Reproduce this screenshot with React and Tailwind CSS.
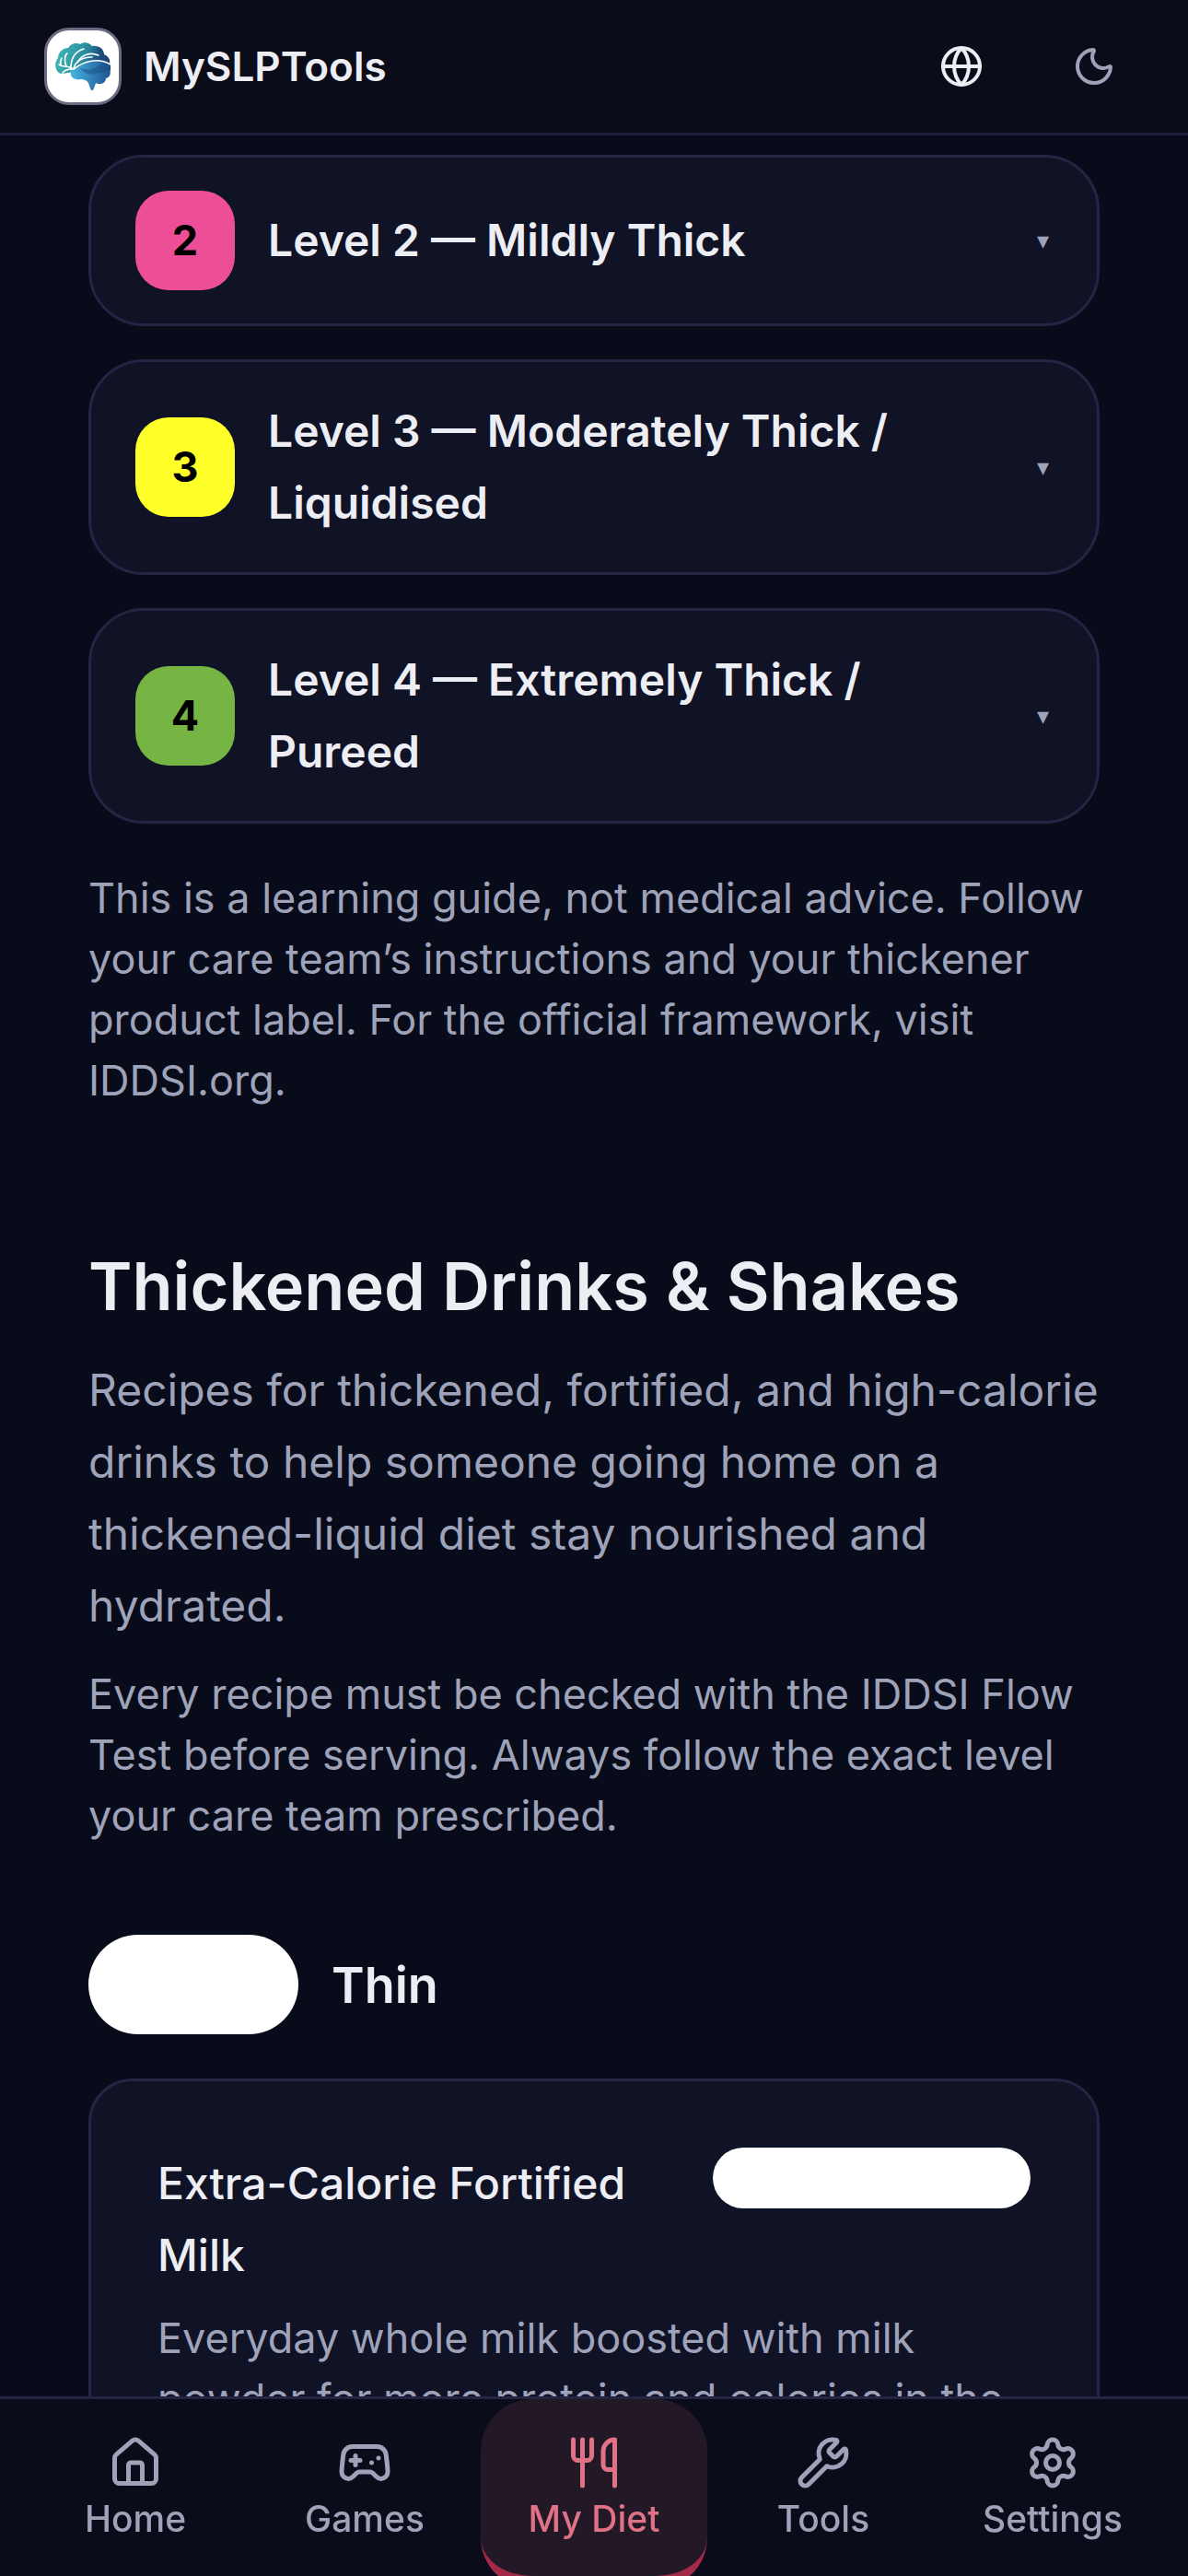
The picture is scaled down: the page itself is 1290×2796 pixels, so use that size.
import React, { useState } from 'react';
import { Globe, Moon, House, Gamepad2, Utensils, Wrench, Settings } from 'lucide-react';

const LEVELS = [
  { id: 2, name: 'Level 2 — Mildly Thick', badge: 'bg-[#ec4f98]' },
  { id: 3, name: 'Level 3 — Moderately Thick / Liquidised', badge: 'bg-[#ffff29]' },
  { id: 4, name: 'Level 4 — Extremely Thick / Pureed', badge: 'bg-[#76b543]' },
];

const TABS = [
  { id: 'home', label: 'Home', icon: House },
  { id: 'games', label: 'Games', icon: Gamepad2 },
  { id: 'diet', label: 'My Diet', icon: Utensils },
  { id: 'tools', label: 'Tools', icon: Wrench },
  { id: 'settings', label: 'Settings', icon: Settings },
];

function BrainLogo() {
  return (
    <svg viewBox="0 0 60 52" className="w-[60px]" aria-hidden="true">
      <defs>
        <linearGradient id="teal" x1="0" y1="0.4" x2="1" y2="0.6">
          <stop offset="0" stopColor="#3fb8b4" />
          <stop offset="0.5" stopColor="#2b8c9f" />
          <stop offset="0.75" stopColor="#1c4f80" />
          <stop offset="1" stopColor="#173f72" />
        </linearGradient>
        <linearGradient id="blue" x1="0" y1="0" x2="1" y2="0">
          <stop offset="0" stopColor="#45b4e0" />
          <stop offset="1" stopColor="#1f5490" />
        </linearGradient>
      </defs>
      <path d="M2 31c-3-5-2-11 1-14 0-6 5-11 11-11 3-5 9-6 13-4 4-3 10-2 13 2 7-1 13 3 13 9 5 2 7 6 6 10 3 4 1 10-4 13L20 32 8 34c-3 0-5-1-6-3Z" fill="url(#teal)" />
      <path d="M21 28c9-4 20-10 32-7 4 2 7 4 6 9 2 4 0 8-4 9 0 5-6 8-11 5l-2 6c-1 3-3 3-4 0l-2-6c-2-3-5-4-8-4-5 1-11-1-11-5-1-4 1-6 4-7Z" fill="url(#blue)" />
      <path d="M27 28c7 2 15 3 21-4 4-2 8-2 11-1 2 4-1 8-6 9-11 1-17 7-26-4Z" fill="#174a84" opacity="0.45" />
      <g fill="none" stroke="#fff" strokeWidth="1.6" strokeLinecap="round">
        <path d="M20 29c9-7 25-14 40-5" />
        <path d="M20 28c2-7 9-12 20-12" />
        <path d="M24 22c4-8 13-12 23-8" />
        <path d="M17 28c0-10 4-18 14-21" />
        <path d="M12 26c-3-7-1-13 1-14" />
        <path d="M6 25c-1-3 0-6 1-8" />
        <path d="M4 24c3 3 9 1 14 4" />
        <path d="M8 33c2-3 6-4 11-4" />
      </g>
    </svg>
  );
}

function Header() {
  return (
    <header className="sticky top-0 z-20 flex h-[147px] items-center justify-between border-b-[3px] border-[#1c1d38] bg-[#0a0c1a] px-12">
      <a href="#home" className="flex items-center gap-6">
        <span className="flex size-[84px] items-center justify-center rounded-[27px] border-[3px] border-[#6b6b82] bg-white">
          <BrainLogo />
        </span>
        <span className="text-[44px] font-semibold">MySLPTools</span>
      </a>
      <div className="flex gap-9">
        <button aria-label="Language" className="flex size-[108px] items-center justify-center">
          <Globe size={48} />
        </button>
        <button aria-label="Dark mode" className="flex size-[108px] items-center justify-center text-[#9fa3ba]">
          <Moon size={48} />
        </button>
      </div>
    </header>
  );
}

function LevelCard({ level }) {
  return (
    <button className="flex w-full items-center gap-9 rounded-[60px] border-[3px] border-[#242544] bg-[#101226] px-12 py-9 text-left">
      <span className={`flex size-[108px] shrink-0 items-center justify-center rounded-[36px] text-[45px] font-bold text-black ${level.badge}`}>
        {level.id}
      </span>
      <span className="flex-1 pr-20 text-5xl leading-[78px] font-semibold">{level.name}</span>
      <span className="pr-1 font-['DejaVu_Sans',sans-serif] text-[26px] text-[#9fa3ba]" aria-hidden="true">▾</span>
    </button>
  );
}

function RecipeCard() {
  return (
    <article className="mt-12 rounded-[48px] border-[3px] border-[#242544] bg-[#101226] p-[72px]">
      <div className="flex items-start justify-between gap-9">
        <h4 className="text-5xl leading-[78px] font-medium">Extra-Calorie Fortified Milk</h4>
        <span className="h-[66px] w-[345px] shrink-0 rounded-full bg-white"></span>
      </div>
      <p className="mt-[18px] text-[45px] leading-[66px] text-[#9fa3ba]">
        Everyday whole milk boosted with milk powder for more protein and calories in the
      </p>
    </article>
  );
}

function TabBar() {
  const [active, setActive] = useState('diet');

  return (
    <nav className="fixed inset-x-0 bottom-0 z-20 grid h-[195px] grid-cols-5 gap-[3px] border-t-[3px] border-[#242544] bg-[#0a0c1a] px-6">
      {TABS.map(({ id, label, icon: Icon }) => (
        <button
          key={id}
          onClick={() => setActive(id)}
          className={`flex h-[206px] flex-col items-center gap-1.5 rounded-[56px] pt-[39px] text-[39px] leading-[50px] font-medium ${
            active === id ? 'border-b-[14px] border-[#a52a4a] bg-[#221826] text-[#df7286]' : 'text-[#9fa3ba]'
          }`}
        >
          <Icon size={60} />
          {label}
        </button>
      ))}
    </nav>
  );
}

export default function App() {
  return (
    <div className="h-screen overflow-hidden bg-[#080b19] font-['Inter',sans-serif] text-[#ededf4] [font-optical-sizing:none]">
      <Header />
      <main className="px-24 pt-[21px]">
        <div className="flex flex-col gap-9">
          {LEVELS.map(level => <LevelCard key={level.id} level={level} />)}
        </div>
        <p className="mt-12 text-[45px] leading-[66px] text-[#9fa3ba]">
          This is a learning guide, not medical advice. Follow your care team’s instructions and your thickener product label. For the official framework, visit IDDSI.org.
        </p>

        <section className="mt-36">
          <h2 className="text-[72px] leading-[92px] font-semibold">Thickened Drinks &amp; Shakes</h2>
          <p className="mt-7 text-5xl leading-[78px] text-[#9fa3ba]">
            Recipes for thickened, fortified, and high-calorie drinks to help someone going home on a thickened-liquid diet stay nourished and hydrated.
          </p>
          <p className="mt-6 text-[45px] leading-[66px] text-[#9fa3ba]">
            Every recipe must be checked with the IDDSI Flow Test before serving. Always follow the exact level your care team prescribed.
          </p>

          <div className="mt-24 flex items-center gap-9">
            <span className="h-[108px] w-[228px] rounded-full bg-white"></span>
            <h3 className="text-[54px] font-semibold">Thin</h3>
          </div>
          <RecipeCard />
        </section>
      </main>
      <TabBar />
    </div>
  );
}
